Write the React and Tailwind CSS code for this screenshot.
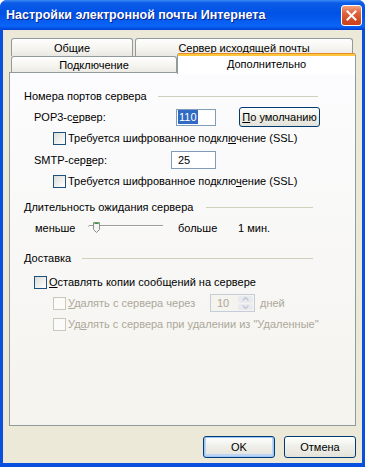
import clsx from 'clsx'

function Checkbox({ disabled }) {
  return (
    <span
      className={clsx(
        'box-border inline-block h-[13px] w-[13px] shrink-0 border',
        disabled
          ? 'border-[#cac8bb] bg-[#fbfbf9]'
          : 'border-[#1c5180] bg-[linear-gradient(135deg,#dcdcd7,#ffffff)]'
      )}
    />
  )
}

function XpButton({ children, primary, className }) {
  return (
    <div
      className={clsx(
        'box-border flex items-center justify-center rounded-[3px] border border-[#003c74] bg-[linear-gradient(180deg,#ffffff,#f0f0ea_45%,#e3e2da)] text-black',
        primary && 'shadow-[inset_0_0_0_1px_#9ec6f7,inset_0_-1px_0_2px_#bcd4f6]',
        className
      )}
    >
      {children}
    </div>
  )
}

function Tab({ children, className }) {
  return (
    <div
      className={clsx(
        'box-border flex items-center justify-center rounded-t-[3px] border border-b-0 border-[#919b9c] bg-[linear-gradient(180deg,#fefefe,#f4f3ee_60%,#e9e8e2)]',
        className
      )}
    >
      {children}
    </div>
  )
}

export default function App() {
  return (
    <div className="flex h-[467px] w-[365px] flex-col overflow-hidden rounded-t-[7px] bg-[#0a50de] text-[11px] leading-[14px] text-black [font-family:Tahoma,'Liberation_Sans',Arial,sans-serif]">
      {/* title bar */}
      <div className="flex h-[30px] shrink-0 items-center justify-between bg-[linear-gradient(180deg,#3b8af5_0%,#0a5be6_10%,#0052e6_45%,#0a64f5_85%,#0658ec_92%,#003dd0_100%)] pl-[6px] pr-[3px]">
        <span className="text-[12.5px] font-bold text-white [text-shadow:1px_1px_#0a1f8a]">
          Настройки электронной почты Интернета
        </span>
        <div className="box-border flex h-[21px] w-[21px] items-center justify-center rounded-[3px] border border-white bg-[linear-gradient(180deg,#f4a182,#e06640_35%,#d44d26_70%,#c8401d)]">
          <svg width="11" height="11" viewBox="0 0 11 11">
            <path d="M1.5 1.5 L9.5 9.5 M9.5 1.5 L1.5 9.5" stroke="white" strokeWidth="2" strokeLinecap="square" />
          </svg>
        </div>
      </div>

      {/* body */}
      <div className="mx-[3px] mb-[4px] flex flex-1 flex-col bg-[#ece9d8] px-[6px] pt-[8px]">
        {/* tabs */}
        <div className="flex h-[18px] gap-[2px] pl-[2px]">
          <Tab className="w-[122px]">Общие</Tab>
          <Tab className="w-[218px]">Сервер исходящей почты</Tab>
        </div>
        <div className="flex h-[17px] pl-[2px]">
          <Tab className="h-[17px] w-[166px]">Подключение</Tab>
          <div className="relative z-10 -mt-[3px] box-border flex h-[21px] w-[179px] flex-col rounded-t-[3px] border-x border-[#919b9c] bg-white">
            <div className="h-[1px] rounded-t-[3px] bg-[#e68b2c]" />
            <div className="h-[2px] bg-[#ffc73c]" />
            <div className="flex flex-1 items-center justify-center pb-[3px]">Дополнительно</div>
          </div>
        </div>

        {/* panel */}
        <div className="-mt-px box-border flex h-[354px] flex-col border border-[#919b9c] bg-[linear-gradient(180deg,#fcfcfe,#f4f3ee)]">
          <div className="mt-[16px] flex h-[14px] items-center">
            <span className="ml-[14px] whitespace-nowrap">Номера портов сервера</span>
            <span className="ml-[11px] h-px w-[160px] bg-[#d0d0bf]" />
          </div>

          <div className="mt-[4px] flex h-[20px] items-center">
            <span className="ml-[24px] w-[142px]">
              POP3-с<span className="underline">е</span>рвер:
            </span>
            <div className="box-border flex h-[17px] w-[40px] items-center border border-[#7f9db9] bg-white pl-[1px]">
              <span className="bg-[#316ac5] px-[1px] text-white">110</span>
            </div>
            <XpButton className="ml-[23px] h-[20px] w-[81px]">
              <span>
                <span className="underline">П</span>о умолчанию
              </span>
            </XpButton>
          </div>

          <div className="mt-[4px] flex h-[14px] items-center pl-[43px]">
            <Checkbox />
            <span className="ml-[2px]">
              Требуется шифрованное подкл<span className="underline">ю</span>чение (SSL)
            </span>
          </div>

          <div className="mt-[6px] flex h-[18px] items-center">
            <span className="ml-[24px] w-[137px]">
              SMTP-сер<span className="underline">в</span>ер:
            </span>
            <div className="box-border flex h-[18px] w-[45px] items-center border border-[#7f9db9] bg-white pl-[6px]">
              25
            </div>
          </div>

          <div className="mt-[5px] flex h-[14px] items-center pl-[43px]">
            <Checkbox />
            <span className="ml-[2px]">
              Требуется шифрованное подклю<span className="underline">ч</span>ение (SSL)
            </span>
          </div>

          <div className="mt-[12px] flex h-[14px] items-center">
            <span className="ml-[14px]">
              <span className="underline">Д</span>лительность ожидания сервера
            </span>
            <span className="ml-[13px] h-px w-[107px] bg-[#d0d0bf]" />
          </div>

          <div className="mt-[7px] flex h-[14px] items-center">
            <span className="ml-[25px] w-[53px]">меньше</span>
            <svg width="76" height="12" viewBox="0 0 76 12" className="shrink-0">
              <path d="M0.5 4.5 Q0.5 3.5 2 3.5 H75" stroke="#9d9c99" fill="none" />
              <path d="M2 4.5 H75" stroke="#ffffff" fill="none" />
              <path d="M5.5 0.5 H11.5 V7.5 L8.5 10.5 L5.5 7.5 Z" fill="#f5f5f1" stroke="#8d8c88" />
              <path d="M6.5 1.5 H10.5" stroke="#21a121" />
            </svg>
            <span className="ml-[14px] w-[60px]">больше</span>
            <span>1 мин.</span>
          </div>

          <div className="mt-[16px] flex h-[14px] items-center">
            <span className="ml-[14px]">Доставка</span>
            <span className="ml-[11px] h-px w-[231px] bg-[#d0d0bf]" />
          </div>

          <div className="mt-[10px] flex h-[14px] items-center pl-[24px]">
            <Checkbox />
            <span className="ml-[2px]">
              <span className="underline">О</span>ставлять копии сообщений на сервере
            </span>
          </div>

          <div className="mt-[5px] flex h-[18px] items-center pl-[43px] text-[#aca899]">
            <Checkbox disabled />
            <span className="ml-[2px] w-[142px]">
              <span className="underline">У</span>далять с сервера через
            </span>
            <div className="box-border flex h-[18px] w-[45px] items-center border border-[#c4cedb] bg-[#f4f3ee]">
              <span className="ml-[6px] flex-1">10</span>
              <div className="mr-[1px] flex h-[14px] w-[15px] flex-col gap-px">
                <div className="flex flex-1 items-center justify-center rounded-[2px] bg-[#e8eaf0]">
                  <svg width="7" height="4" viewBox="0 0 7 4">
                    <path d="M0.5 3.5 L3.5 0.5 L6.5 3.5" stroke="#c3c8d6" fill="none" strokeWidth="1.5" />
                  </svg>
                </div>
                <div className="flex flex-1 items-center justify-center rounded-[2px] bg-[#e8eaf0]">
                  <svg width="7" height="4" viewBox="0 0 7 4">
                    <path d="M0.5 0.5 L3.5 3.5 L6.5 0.5" stroke="#c3c8d6" fill="none" strokeWidth="1.5" />
                  </svg>
                </div>
              </div>
            </div>
            <span className="ml-[5px]">дней</span>
          </div>

          <div className="mt-[5px] flex h-[14px] items-center pl-[43px] text-[#aca899]">
            <Checkbox disabled />
            <span className="ml-[2px]">
              Уд<span className="underline">а</span>лять с сервера при удалении из "Удаленные"
            </span>
          </div>
        </div>

        {/* buttons */}
        <div className="mt-[10px] flex justify-end gap-[9px]">
          <XpButton primary className="h-[22px] w-[72px]">
            OK
          </XpButton>
          <XpButton className="h-[22px] w-[72px]">Отмена</XpButton>
        </div>
      </div>
    </div>
  )
}
